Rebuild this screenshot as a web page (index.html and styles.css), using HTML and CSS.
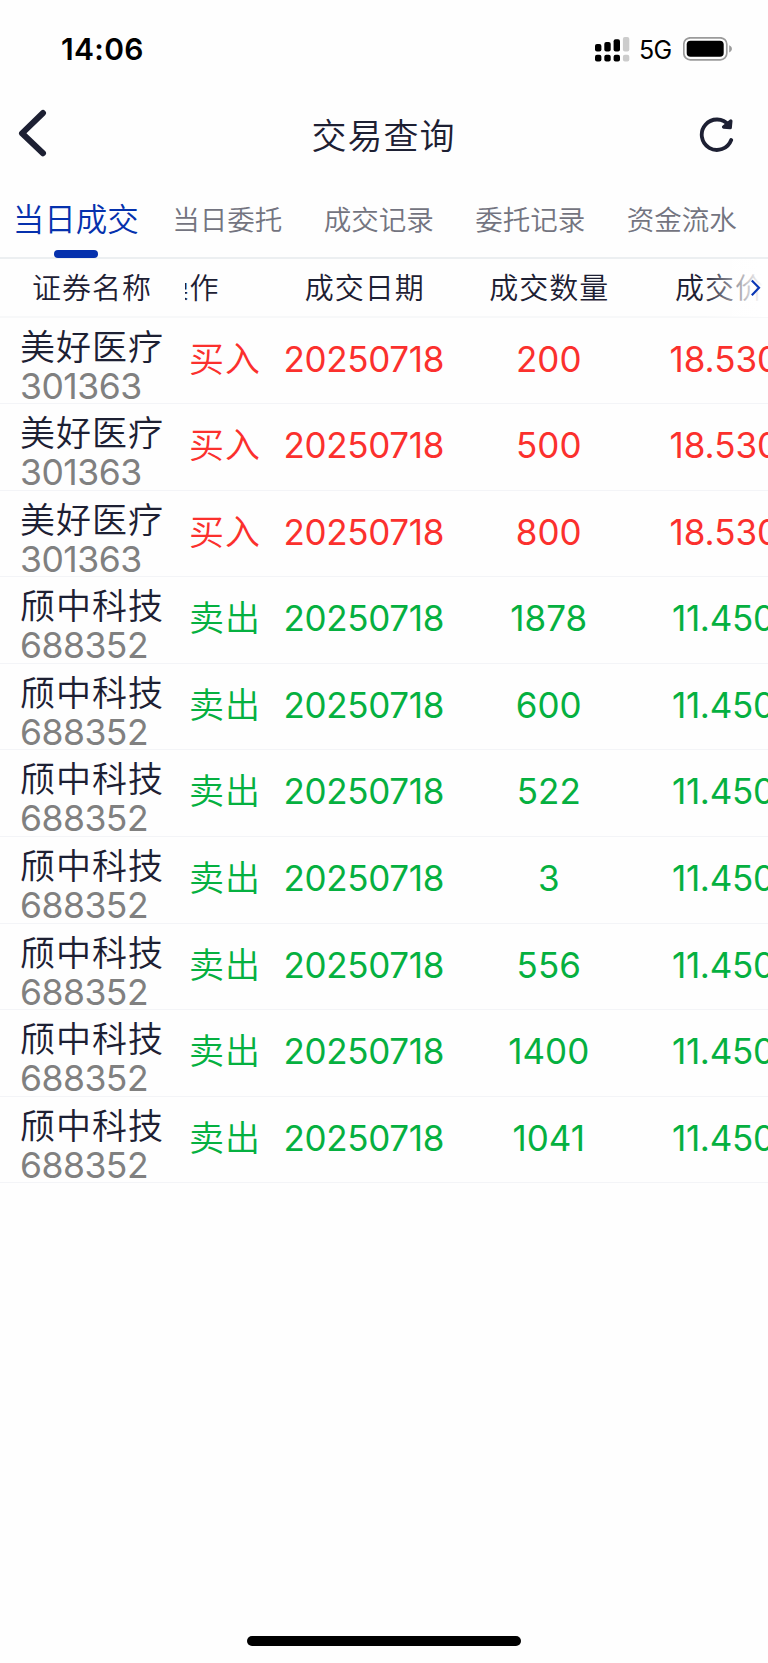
FILE: index.html
```html
<!DOCTYPE html>
<html lang="zh-CN">
<head>
    <meta charset="UTF-8">
    <meta name="viewport" content="width=device-width, initial-scale=1.0">
    <title>交易查询</title>
    <link rel="stylesheet" href="styles.css">
</head>
<body>
    <div class="status-bar">
        <span class="time">14:06</span>
        <svg class="signal" width="35" height="26" viewBox="0 0 35 26">
            <g fill="#000">
                <rect x="0" y="7" width="6.4" height="7.5" rx="2"/>
                <rect x="9.3" y="5" width="6.4" height="9.5" rx="2"/>
                <rect x="18.6" y="2.3" width="6.4" height="12.2" rx="2"/>
                <rect x="0" y="17.8" width="6.4" height="6.6" rx="2"/>
                <rect x="9.3" y="17.8" width="6.4" height="6.6" rx="2"/>
                <rect x="18.6" y="17.8" width="6.4" height="6.6" rx="2"/>
            </g>
            <g fill="#ccc">
                <rect x="27.9" y="0" width="6.4" height="14.5" rx="2"/>
                <rect x="27.9" y="17.8" width="6.4" height="6.6" rx="2"/>
            </g>
        </svg>
        <span class="network">5G</span>
        <svg class="battery" width="50" height="24" viewBox="0 0 50 24">
            <rect x="0.8" y="0.8" width="43" height="22" rx="6.5" fill="none" stroke="#9b9b9b" stroke-width="1.7"/>
            <rect x="3.7" y="3.8" width="37" height="16" rx="3.8" fill="#000"/>
            <path d="M46.2 8.2C48 9 48.9 10.2 48.9 11.8S48 14.6 46.2 15.4Z" fill="#9b9b9b"/>
        </svg>
    </div>

    <div class="nav-bar">
        <svg class="back" width="30" height="48" viewBox="0 0 30 48">
            <path d="M25 4L4 24.3L25 44.2" fill="none" stroke="#1d2033" stroke-width="6" stroke-linecap="round" stroke-linejoin="round"/>
        </svg>
        <h1>交易查询</h1>
        <svg class="refresh" width="36" height="36" viewBox="0 0 36 36">
            <path d="M32.2 23A15.2 15.2 0 1 1 29.8 8.2" fill="none" stroke="#1d2033" stroke-width="3.8" stroke-linecap="round"/>
            <path d="M31.8 4L31.2 10.6L24.6 10Z" fill="#1d2033" stroke="#1d2033" stroke-width="3.4" stroke-linejoin="round"/>
        </svg>
    </div>

    <div class="tabs">
        <a class="tab active">当日成交</a>
        <a class="tab">当日委托</a>
        <a class="tab">成交记录</a>
        <a class="tab">委托记录</a>
        <a class="tab">资金流水</a>
    </div>

    <div class="table">
        <div class="row head">
            <div class="name">证券名称</div>
            <div class="cells">
                <span class="op"><span>操作</span></span>
                <span class="date">成交日期</span>
                <span class="qty">成交数量</span>
                <span class="price">成交价</span>
            </div>
            <div class="more">
                <svg width="12" height="20" viewBox="0 0 12 20">
                    <path d="M1.8 2.4L9 9.8L1.8 17.2" fill="none" stroke="#0a37b5" stroke-width="2.2"/>
                </svg>
            </div>
        </div>
        <div class="row buy">
            <div class="name">美好医疗<small>301363</small></div>
            <div class="cells"><span class="op">买入</span><span class="date">20250718</span><span class="qty">200</span><span class="price">18.530</span></div>
        </div>
        <div class="row buy">
            <div class="name">美好医疗<small>301363</small></div>
            <div class="cells"><span class="op">买入</span><span class="date">20250718</span><span class="qty">500</span><span class="price">18.530</span></div>
        </div>
        <div class="row buy">
            <div class="name">美好医疗<small>301363</small></div>
            <div class="cells"><span class="op">买入</span><span class="date">20250718</span><span class="qty">800</span><span class="price">18.530</span></div>
        </div>
        <div class="row sell">
            <div class="name">颀中科技<small>688352</small></div>
            <div class="cells"><span class="op">卖出</span><span class="date">20250718</span><span class="qty">1878</span><span class="price">11.450</span></div>
        </div>
        <div class="row sell">
            <div class="name">颀中科技<small>688352</small></div>
            <div class="cells"><span class="op">卖出</span><span class="date">20250718</span><span class="qty">600</span><span class="price">11.450</span></div>
        </div>
        <div class="row sell">
            <div class="name">颀中科技<small>688352</small></div>
            <div class="cells"><span class="op">卖出</span><span class="date">20250718</span><span class="qty">522</span><span class="price">11.450</span></div>
        </div>
        <div class="row sell">
            <div class="name">颀中科技<small>688352</small></div>
            <div class="cells"><span class="op">卖出</span><span class="date">20250718</span><span class="qty">3</span><span class="price">11.450</span></div>
        </div>
        <div class="row sell">
            <div class="name">颀中科技<small>688352</small></div>
            <div class="cells"><span class="op">卖出</span><span class="date">20250718</span><span class="qty">556</span><span class="price">11.450</span></div>
        </div>
        <div class="row sell">
            <div class="name">颀中科技<small>688352</small></div>
            <div class="cells"><span class="op">卖出</span><span class="date">20250718</span><span class="qty">1400</span><span class="price">11.450</span></div>
        </div>
        <div class="row sell">
            <div class="name">颀中科技<small>688352</small></div>
            <div class="cells"><span class="op">卖出</span><span class="date">20250718</span><span class="qty">1041</span><span class="price">11.450</span></div>
        </div>
    </div>

    <div class="home-indicator"></div>
</body>
</html>
```

FILE: styles.css
```css
* {
    box-sizing: border-box;
}
body {
    margin: 0;
    height: 1663px;
    display: flex;
    flex-direction: column;
    overflow: hidden;
    background-color: #fefefe;
    color: #1d2033;
    font-family: Inter, "Noto Sans CJK SC DemiLight", "Noto Sans CJK SC", sans-serif;
    white-space: nowrap;
}
svg {
    display: block;
    flex: none;
}
.status-bar {
    display: flex;
    height: 96px;
    padding: 0 35px 0 61px;
    color: #000;
}
.time {
    margin-top: 31px;
    font-size: 30px;
    font-weight: 600;
    line-height: 36px;
    letter-spacing: 0.3px;
}
.signal {
    margin: 37px 9px 0 auto;
}
.network {
    width: 33px;
    margin-top: 35px;
    font-size: 25px;
    line-height: 30px;
    letter-spacing: -0.8px;
}
.battery {
    margin: 37px 0 0 11px;
}
.nav-bar {
    display: flex;
    justify-content: space-between;
    align-items: center;
    height: 78px;
    padding: 0 33px 0 18px;
}
.back {
    margin-top: -4px;
}
.nav-bar h1 {
    margin: 2px 0 0 20px;
    font-size: 35px;
    font-weight: 400;
    line-height: 50px;
    letter-spacing: 1px;
}
.tabs {
    display: flex;
    height: 85px;
    border-bottom: 2px solid #eceff1;
    color: #737480;
    font-size: 27.5px;
    line-height: 92px;
}
.tab {
    width: 151.5px;
    flex: none;
    text-align: center;
}
.tab.active {
    position: relative;
    color: #0531ad;
    font-size: 31.5px;
    line-height: 91px;
}
.tab.active::after {
    content: "";
    position: absolute;
    left: 54px;
    bottom: -1px;
    width: 44px;
    height: 8px;
    border-radius: 4px;
    background-color: #0531ad;
}
.row {
    display: flex;
    height: 86.6px;
    border-bottom: 1px solid #f3f4f7;
    font-size: 35px;
}
.name {
    width: 185px;
    flex: none;
    padding: 8px 0 0 20px;
    line-height: 42px;
    letter-spacing: 1px;
}
.name small {
    display: block;
    margin-top: -2px;
    color: #808080;
    font-size: 35.5px;
    letter-spacing: -0.5px;
}
.cells {
    flex: 1;
    display: grid;
    grid-template-columns: 87px 184.5px 184.5px 184.5px;
    overflow: hidden;
    line-height: 82px;
}
.cells span {
    text-align: center;
}
.buy .cells {
    color: #fb302d;
}
.sell .cells {
    color: #05b040;
}
.row:not(.head) .op {
    padding-right: 7px;
    letter-spacing: 1px;
}
.row:not(.head) .date {
    padding-right: 1px;
    letter-spacing: -0.3px;
}
.row:not(.head) .price {
    padding-left: 28.5px;
    text-align: left;
}
.row.sell .cells .price {
    padding-left: 31px;
    letter-spacing: -0.3px;
}
.head {
    position: relative;
    height: 58.5px;
    border-bottom: 2px solid #f7f8f9;
    font-size: 29px;
}
.head .name {
    padding: 0 0 0 32px;
    line-height: 59px;
}
.head .cells {
    line-height: 59px;
    letter-spacing: 1px;
}
.head .op span {
    display: block;
    margin-left: -25.5px;
    text-align: left;
}
.head .date,
.head .qty {
    padding-left: 1px;
}
.head .price {
    padding-left: 34px;
    text-align: left;
}
.more {
    position: absolute;
    top: 0;
    right: 0;
    display: flex;
    align-items: center;
    justify-content: flex-end;
    width: 66px;
    height: 58px;
    padding-right: 6px;
    background: linear-gradient(to right, rgba(255, 255, 255, 0), #fff 92%);
}
.home-indicator {
    width: 274px;
    height: 10px;
    margin: auto auto 17px 247px;
    border-radius: 5px;
    background-color: #000;
}
```
